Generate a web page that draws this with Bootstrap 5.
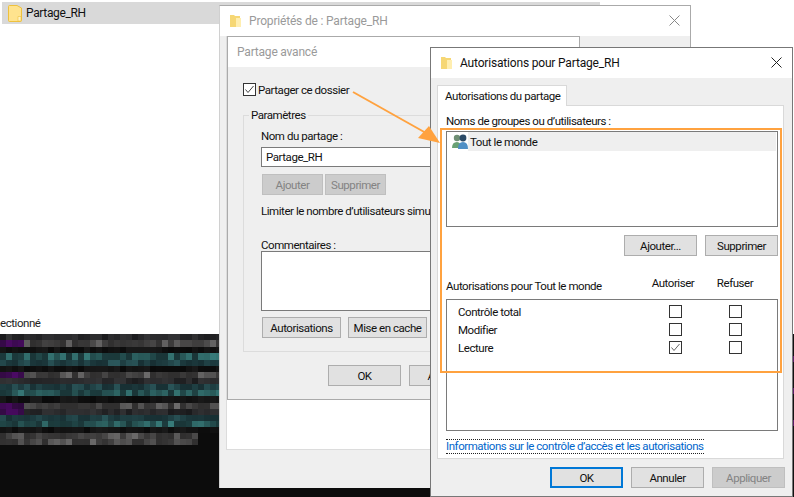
<!doctype html>
<html lang="fr"><head><meta charset="utf-8">
<link href="https://cdn.jsdelivr.net/npm/bootstrap@5.3.0/dist/css/bootstrap.min.css" rel="stylesheet">
<style>
body{background:#fff;margin:0;width:794px;height:497px;overflow:hidden;font:11.5px/16px Roboto,sans-serif;letter-spacing:-.45px;color:#111}
.desk{position:relative;width:794px;height:497px;overflow:hidden;background:#fff}
.abs{position:absolute}
.row-sel{left:2px;top:2px;width:598px;height:22px;background:#d9d9d9;padding-left:6px;gap:4px;font-size:12px;letter-spacing:-.35px}
.status{left:0;top:314px;color:#222}
.mosaic{left:0;top:334px;width:220px;height:163px;background:#0c0c0c}
.strip{left:220px;top:487px;width:574px;height:10px;background:#0c0c0c}
.rstrip{left:792px;top:334px;width:2px;height:163px;background:#111}
.pmark{left:792px;width:2px;height:6px;background:#5a1a66}
.win{background:#efefef;border:1px solid #aaa}
.win-prop{left:219px;top:5px;width:472px;height:483px;border-bottom:0;border-left-color:#d0d0d0}
.bar{height:30px;background:#fff;padding-left:10px;gap:8px;font-size:12px;letter-spacing:-.18px}
.faded{color:#9a9a9a}
.propsheet{left:226px;top:36px;width:354px;height:414px;background:#fff;border:1px solid #dcdcdc;border-top:0}
.win-adv{left:227px;top:36px;width:353px;height:364px;border:1px solid #aaa;background:#efefef}
.adv-bar{height:30px;background:#fff;padding-left:9px;font-size:12px;letter-spacing:-.2px}
.win-perm{left:430px;top:47px;width:363px;height:450px;border:1px solid #777}
.x-btn{right:10px}
.wbtn{box-sizing:border-box;width:73px;height:21px;background:#e1e1e1;border:1px solid #adadad;color:#111;text-align:center;line-height:20px;padding:0;border-radius:0}
.wbtn.off{background:#ccc;border-color:#bfbfbf;color:#838383}
.wbtn.def{border:2px solid #0078d7;line-height:18px}
.fld{background:#fff;border:1px solid #7a7a7a}
.chk{box-sizing:border-box;width:13px;height:13px;background:#fff;border:1px solid #333;display:block}
.chk svg{display:block}
.grp{left:243px;top:115px;width:340px;height:237px;border:1px solid #dcdcdc}
.legend{left:249px;top:106px;background:#efefef;padding:0 2px}
.tab-h{left:437px;top:85px;width:130px;height:21px;background:#fff;border:1px solid #d9d9d9;border-bottom:0;padding:1px 0 0 7px;z-index:2}
.tab-p{left:437px;top:105px;width:347px;height:354px;background:#fff;border:1px solid #d9d9d9}
.li-sel{left:468px;top:132px;width:308px;height:19px;background:#efefef;padding:1px 0 0 2px}
.info-lnk{left:446px;top:439px;width:258px;height:15px;border-top:1px dotted #222;border-bottom:1px dotted #222;color:#0066cc;line-height:13px;white-space:nowrap}
.hl{left:440px;top:128px;width:342px;height:245px;border:2px solid #ffa23f;z-index:5}
.arrow{left:340px;top:80px;z-index:6}
.t{white-space:nowrap;line-height:18px}
</style></head><body>
<div class="desk">
  <div class="abs row-sel d-flex align-items-center"><svg width="14" height="17" viewBox="0 0 14 17"><path d="M.5 1.5Q.5.5 1.5.5H9L13.5 3V15.5Q13.5 16.5 12.5 16.5H1.5Q.5 16.5.5 15.5Z" fill="#ffe38e" stroke="#eec13d"/><path d="M10 11.5H13V16H10Z" fill="#fff3c4" stroke="#eec13d" stroke-width=".6"/></svg><span>Partage_RH</span></div>
  <div class="abs status t">ectionné</div>
  <svg class="abs mosaic" id="mosaic" width="220" height="163"></svg>
  <div class="abs strip"></div>
  <div class="abs rstrip"></div>
  <div class="abs pmark" style="top:356px"></div>
  <div class="abs pmark" style="top:388px"></div>
  <div class="abs pmark" style="top:420px"></div>

  <div class="abs win win-prop">
    <div class="bar d-flex align-items-center"><svg width="11" height="14" viewBox="0 0 11 14"><path d="M0 1H4L5 2H10V13H0Z" fill="#f6d774"/><path d="M6 4H11V13H6Z" fill="#ffeeb0"/></svg><span class="faded">Propriétés de : Partage_RH</span></div>
    <svg class="abs x-btn" width="11" height="11" style="top:9px" viewBox="0 0 11 11"><path d="M.5.5 10.5 10.5M10.5.5.5 10.5" stroke="#888" fill="none"/></svg>
  </div>
  <div class="abs propsheet"></div>
  <div class="abs win-adv">
    <div class="adv-bar d-flex align-items-center faded">Partage avancé</div>
  </div>
  <span class="abs chk" style="left:243px;top:83px"><svg width="11" height="11" viewBox="0 0 11 11"><path d="M1.5 5.5 4 8.5 9.5 2" stroke="#444" fill="none"/></svg></span>
  <div class="abs t" style="left:258px;top:81px">Partager ce dossier</div>
  <div class="abs grp"></div>
  <div class="abs legend t">Paramètres</div>
  <div class="abs t" style="left:261px;top:127px">Nom du partage :</div>
  <div class="abs fld t" style="left:261px;top:147px;width:300px;height:20px;padding:0 4px">Partage_RH</div>
  <div class="abs wbtn off" style="left:262px;top:174px;width:61px">Ajouter</div>
  <div class="abs wbtn off" style="left:325px;top:174px;width:61px">Supprimer</div>
  <div class="abs t" style="left:261px;top:202px">Limiter le nombre d’utilisateurs simultanés à :</div>
  <div class="abs t" style="left:261px;top:236px">Commentaires :</div>
  <div class="abs fld" style="left:261px;top:251px;width:300px;height:60px"></div>
  <div class="abs wbtn" style="left:262px;top:317px;width:79px">Autorisations</div>
  <div class="abs wbtn" style="left:348px;top:317px;width:79px">Mise en cache</div>
  <div class="abs wbtn" style="left:328px;top:365px">OK</div>
  <div class="abs wbtn" style="left:409px;top:365px">Annuler</div>

  <div class="abs win win-perm">
    <div class="bar d-flex align-items-center"><svg width="11" height="14" viewBox="0 0 11 14"><path d="M0 1H4L5 2H10V13H0Z" fill="#f6d774"/><path d="M6 4H11V13H6Z" fill="#ffeeb0"/></svg><span>Autorisations pour Partage_RH</span></div>
    <svg class="abs x-btn" width="11" height="11" style="top:9px" viewBox="0 0 11 11"><path d="M.5.5 10.5 10.5M10.5.5.5 10.5" stroke="#222" fill="none"/></svg>
  </div>
  <div class="abs tab-p"></div>
  <div class="abs tab-h t">Autorisations du partage</div>
  <div class="abs t" style="left:446px;top:112px">Noms de groupes ou d’utilisateurs :</div>
  <div class="abs fld" style="left:446px;top:131px;width:332px;height:96px"></div>
  <svg class="abs" style="left:452px;top:134px" width="17" height="15" viewBox="0 0 17 15"><circle cx="5" cy="4" r="3.2" fill="#6f8f74"/><path d="M0 14Q0 8 5 8Q9 8 9 14Z" fill="#6aa174"/><circle cx="11" cy="4" r="3.4" fill="#2b4a66"/><path d="M6 15Q6 8 11 8Q16 8 16 15Z" fill="#4f8fc5"/></svg>
  <div class="abs li-sel t d-flex align-items-center">Tout le monde</div>
  <div class="abs wbtn" style="left:624px;top:235px">Ajouter...</div>
  <div class="abs wbtn" style="left:705px;top:235px">Supprimer</div>
  <div class="abs t" style="left:446px;top:277px">Autorisations pour Tout le monde</div>
  <div class="abs t text-center" style="left:643px;top:274px;width:60px">Autoriser</div>
  <div class="abs t text-center" style="left:705px;top:274px;width:60px">Refuser</div>
  <div class="abs fld" style="left:446px;top:299px;width:332px;height:132px"></div>
  <div class="abs t" style="left:458px;top:303px">Contrôle total</div>
  <div class="abs t" style="left:458px;top:321px">Modifier</div>
  <div class="abs t" style="left:458px;top:339px">Lecture</div>
  <span class="abs chk" style="left:669px;top:305px"></span>
  <span class="abs chk" style="left:729px;top:305px"></span>
  <span class="abs chk" style="left:669px;top:323px"></span>
  <span class="abs chk" style="left:729px;top:323px"></span>
  <span class="abs chk" style="left:669px;top:341px"><svg width="11" height="11" viewBox="0 0 11 11"><path d="M1.5 5.5 4 8.5 9.5 2" stroke="#666" fill="none"/></svg></span>
  <span class="abs chk" style="left:729px;top:341px"></span>
  <div class="abs info-lnk">Informations sur le contrôle d’accès et les autorisations</div>
  <div class="abs wbtn def" style="left:550px;top:467px">OK</div>
  <div class="abs wbtn" style="left:631px;top:467px">Annuler</div>
  <div class="abs wbtn off" style="left:712px;top:467px">Appliquer</div>

  <div class="abs hl"></div>
  <svg class="abs arrow" width="110" height="70" viewBox="340 80 110 70"><path d="M353 92 426 133" stroke="#ffa23f" stroke-width="2" fill="none"/><path d="M440 143 418 138 429 126Z" fill="#ffa23f"/></svg>
</div>
<script>
(function(){
var s=document.getElementById('mosaic'),h=[],seed=7;
function r(){seed=(seed*16807)%2147483647;return seed/2147483647}
var rows=['g','G','k','t','T','k','G','g','T','t','k','G','g','T','t','k','G','G'];
var rowY=[0,6,13,19,26,32,38,44,50,56,62,69,75,81,87,93,99,105];
rows.forEach(function(k,i){
 var w=(i>=16)?33:37;
 for(var c=0;c<w;c++){
  var v=r(),col;
  if(k=='k'){var b=10+v*16|0;col='rgb('+b+','+b+','+b+')'}
  else if(k=='g'){var b=26+v*26|0;col='rgb('+b+','+b+','+(b+2)+')'}
  else if(k=='G'){var b=48+v*v*60|0;col='rgb('+b+','+(b-1)+','+(b-1)+')'}
  else if(k=='t'){var a=v*v;col='rgb('+(26+a*30|0)+','+(54+a*70|0)+','+(56+a*66|0)+')'}
  else {var a=v*v;col='rgb('+(24+a*20|0)+','+(48+a*40|0)+','+(52+a*40|0)+')'}
  if(c<4&&(i==1||i==6||i==11||i==12)) col='rgb('+(45+v*30|0)+',10,'+(60+v*40|0)+')';
  h.push('<rect x="'+c*6+'" y="'+rowY[i]+'" width="6" height="'+((rowY[i+1]||111)-rowY[i])+'" fill="'+col+'"/>');
 }
});
s.innerHTML=h.join('');
})();
</script>
<script src="https://cdn.jsdelivr.net/npm/bootstrap@5.3.0/dist/js/bootstrap.bundle.min.js"></script>
</body></html>
